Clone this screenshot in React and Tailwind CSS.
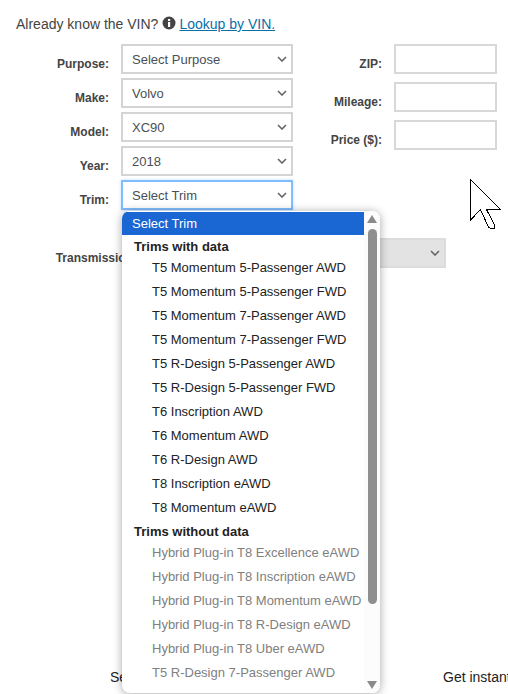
import React from "react";

const Chevron = () => (
  <svg width="10" height="6" viewBox="0 0 10 6" fill="none" className="shrink-0">
    <path d="M1 1l4 4 4-4" stroke="#666" strokeWidth="1.6" />
  </svg>
);

const SelectBox = ({ value, focused, disabled, className = "" }) => (
  <div
    className={`h-[30px] flex items-center justify-between pl-[9px] pr-[4px] border-2 text-[13px] text-[#495057] ${
      focused
        ? "border-[#80bdff] bg-white shadow-[0_0_3px_rgba(128,189,255,0.5)]"
        : disabled
          ? "border-[#dcdcdc] bg-[#e3e3e3]"
          : "border-[#d4d4d4] bg-white"
    } ${className}`}
  >
    <span className="pt-[2px]">{value}</span>
    <Chevron />
  </div>
);

const leftRows = [
  ["Purpose:", "Select Purpose"],
  ["Make:", "Volvo"],
  ["Model:", "XC90"],
  ["Year:", "2018"],
  ["Trim:", "Select Trim"],
];

const withData = [
  "T5 Momentum 5-Passenger AWD",
  "T5 Momentum 5-Passenger FWD",
  "T5 Momentum 7-Passenger AWD",
  "T5 Momentum 7-Passenger FWD",
  "T5 R-Design 5-Passenger AWD",
  "T5 R-Design 5-Passenger FWD",
  "T6 Inscription AWD",
  "T6 Momentum AWD",
  "T6 R-Design AWD",
  "T8 Inscription eAWD",
  "T8 Momentum eAWD",
];

const withoutData = [
  "Hybrid Plug-in T8 Excellence eAWD",
  "Hybrid Plug-in T8 Inscription eAWD",
  "Hybrid Plug-in T8 Momentum eAWD",
  "Hybrid Plug-in T8 R-Design eAWD",
  "Hybrid Plug-in T8 Uber eAWD",
  "T5 R-Design 7-Passenger AWD",
];

const TrimDropdown = () => (
  <div className="absolute left-[122px] top-[211px] w-[258px] h-[482px] bg-white rounded-[8px] shadow-[0_1px_10px_rgba(0,0,0,0.35)] overflow-hidden flex text-[13px]">
    <div className="flex-1 min-w-0 pt-px">
      <div className="h-[23px] leading-[24px] pl-[10px] bg-[#1a66d2] text-white">Select Trim</div>
      <div className="h-5 leading-[24px] pl-3 font-bold text-[#222]">Trims with data</div>
      {withData.map((trim) => (
        <div key={trim} className="h-6 leading-[26px] pl-[30px] text-[#222] whitespace-nowrap">
          {trim}
        </div>
      ))}
      <div className="mt-px h-5 leading-[24px] pl-3 font-bold text-[#222]">Trims without data</div>
      {withoutData.map((trim) => (
        <div key={trim} className="h-6 leading-[26px] pl-[30px] text-[#808080] whitespace-nowrap">
          {trim}
        </div>
      ))}
    </div>
    {/* scrollbar */}
    <div className="w-4 shrink-0 flex flex-col items-center pt-[4px] pb-[4px] bg-[#fcfcfc]">
      <svg width="10" height="8" viewBox="0 0 10 8" className="shrink-0">
        <path d="M5 0l5 8H0z" fill="#8a8a8a" />
      </svg>
      <div className="w-[9px] h-[375px] mt-[6px] rounded-[5px] bg-[#8f8f8f]" />
      <div className="flex-1" />
      <svg width="10" height="8" viewBox="0 0 10 8" className="shrink-0">
        <path d="M5 8l5-8H0z" fill="#8a8a8a" />
      </svg>
    </div>
  </div>
);

const Cursor = () => (
  <svg width="32" height="50" viewBox="0 0 32 50" className="absolute left-[470px] top-[179px]" shapeRendering="crispEdges">
    <path
      d="M0.5 0.5V41L10.5 30.5L18 47Q19 49.5 21 49.5H24.5V46L16.5 30.5H30.5Z"
      fill="#fff"
      stroke="#000"
      strokeWidth="1"
    />
  </svg>
);

export default function App() {
  return (
    <div className="relative h-[694px] w-[508px] overflow-hidden bg-white font-['Liberation_Sans',Arial,sans-serif]">
      <div className="pl-4 pt-[15px] h-11 text-[14px] leading-[18px] text-[#444] flex items-start gap-1">
        <span>Already know the VIN?</span>
        <svg width="14" height="14" viewBox="0 0 14 14" className="mt-px">
          <circle cx="7" cy="7" r="6.5" fill="#444" />
          <rect x="6" y="6" width="2.2" height="5" fill="#fff" />
          <rect x="6" y="3" width="2.2" height="2" fill="#fff" />
        </svg>
        <a className="-ml-px text-[#0a6fa8] underline">Lookup by VIN.</a>
      </div>

      <div className="flex">
        <div className="w-[293px] flex flex-col gap-1">
          {leftRows.map(([label, value]) => (
            <div key={label} className="flex items-center gap-3">
              <label className="w-[109px] pt-[10px] text-right text-[12px] font-bold text-[#444]">{label}</label>
              <SelectBox value={value} focused={label === "Trim:"} className="w-[172px]" />
            </div>
          ))}
        </div>
        <div className="ml-[37px] w-[167px] flex flex-col gap-2">
          {["ZIP:", "Mileage:", "Price ($):"].map((label) => (
            <div key={label} className="flex items-center gap-3">
              <label className="w-[52px] pt-[10px] text-right text-[12px] font-bold text-[#444] whitespace-nowrap">{label}</label>
              <input className="w-[103px] h-[30px] border-2 border-[#d8d8d8] bg-white" />
            </div>
          ))}
        </div>
      </div>

      <div className="mt-7 flex items-center gap-3">
        <label className="w-[137px] pt-[9px] text-right text-[12px] font-bold text-[#444]">Transmission:</label>
        <SelectBox value="" disabled className="w-[297px]" />
      </div>

      <div className="mt-[399px] flex text-[14px] text-[#222]">
        <span className="ml-[110px]">Select</span>
        <span className="ml-auto -mr-5 whitespace-nowrap w-[85px]">Get instant</span>
      </div>

      <TrimDropdown />
      <Cursor />
    </div>
  );
}
